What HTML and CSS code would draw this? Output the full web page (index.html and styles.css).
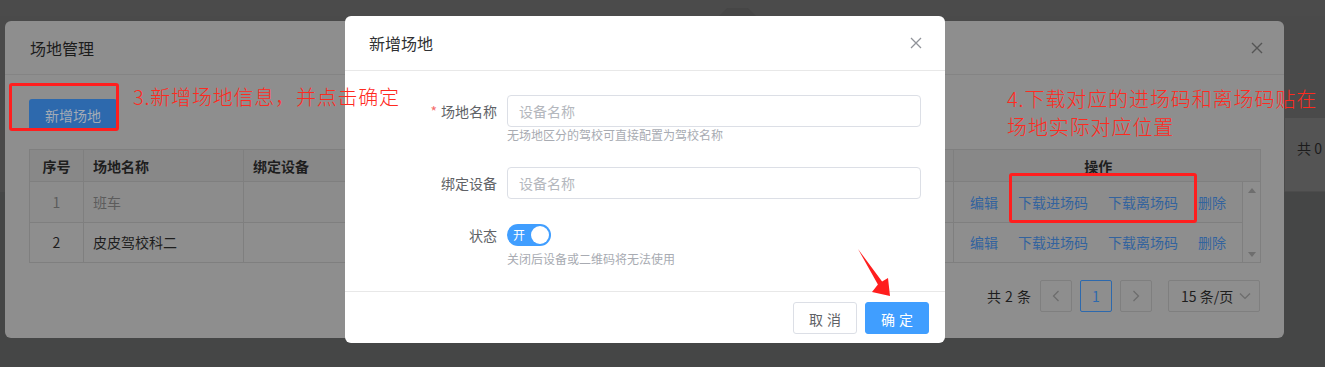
FILE: index.html
```html
<!DOCTYPE html>
<html lang="zh-CN">
<head>
    <meta charset="UTF-8">
    <meta name="viewport" content="width=device-width, initial-scale=1.0">
    <title>场地管理</title>
    <link rel="stylesheet" href="styles.css">
</head>
<body>
    <!-- page behind the dialogs -->
    <div class="bg-page">
        <div class="bg-top"><div class="bg-tab"></div></div>
        <div class="bg-main">
            <div class="bg-card"><span>共 0</span></div>
        </div>
    </div>

    <!-- 场地管理 dialog (dimmed by the mask) -->
    <div class="venue-dialog">
        <div class="venue-header">
            <span class="venue-title">场地管理</span>
            <svg class="venue-close" width="12" height="12" viewBox="0 0 12 12">
                <path d="M1 1L11 11M11 1L1 11" stroke="#555" stroke-width="1.4" fill="none"/>
            </svg>
        </div>
        <div class="venue-body">
            <button class="btn-add">新增场地</button>

            <table class="venue-table">
                <colgroup>
                    <col class="c-no">
                    <col class="c-name">
                    <col class="c-mid">
                    <col class="c-mid">
                    <col class="c-mid">
                    <col>
                    <col class="c-op">
                    <col class="c-gutter">
                </colgroup>
                <thead>
                    <tr>
                        <th class="center">序号</th>
                        <th>场地名称</th>
                        <th>绑定设备</th>
                        <th>进场设备</th>
                        <th>离场设备</th>
                        <th>状态</th>
                        <th class="center op-head">操作</th>
                        <th class="gutter-head"></th>
                    </tr>
                </thead>
                <tbody>
                    <tr class="row-muted">
                        <td class="center">1</td>
                        <td>班车</td>
                        <td></td>
                        <td></td>
                        <td></td>
                        <td></td>
                        <td class="ops">
                            <a>编辑</a><a>下载进场码</a><a>下载离场码</a><a>删除</a>
                        </td>
                        <td class="scroll" rowspan="2">
                            <div class="scroll-bar">
                                <span class="tri-up"></span>
                                <span class="tri-down"></span>
                            </div>
                        </td>
                    </tr>
                    <tr>
                        <td class="center">2</td>
                        <td>皮皮驾校科二</td>
                        <td></td>
                        <td></td>
                        <td></td>
                        <td></td>
                        <td class="ops">
                            <a>编辑</a><a>下载进场码</a><a>下载离场码</a><a>删除</a>
                        </td>
                    </tr>
                </tbody>
            </table>

            <div class="pager">
                <span class="pager-total">共 2 条</span>
                <span class="pager-btn">
                    <svg width="8" height="12" viewBox="0 0 8 12"><path d="M6.5 1L1.5 6l5 5" stroke="#6c6c6c" stroke-width="1.2" fill="none"/></svg>
                </span>
                <span class="pager-btn active">1</span>
                <span class="pager-btn">
                    <svg width="8" height="12" viewBox="0 0 8 12"><path d="M1.5 1l5 5-5 5" stroke="#6c6c6c" stroke-width="1.2" fill="none"/></svg>
                </span>
                <span class="pager-size">
                    15 条/页
                    <svg width="12" height="8" viewBox="0 0 12 8"><path d="M1 1.5l5 5 5-5" stroke="#6c6c6c" stroke-width="1.2" fill="none"/></svg>
                </span>
            </div>
        </div>
    </div>

    <!-- 新增场地 dialog -->
    <div class="add-dialog">
        <div class="add-header">
            <span class="add-title">新增场地</span>
            <svg class="add-close" width="12" height="12" viewBox="0 0 12 12">
                <path d="M1 1L11 11M11 1L1 11" stroke="#909399" stroke-width="1.3" fill="none"/>
            </svg>
        </div>
        <div class="add-body">
            <div class="form-item item-name">
                <label class="form-label"><span class="req">*</span>场地名称</label>
                <div class="form-control">
                    <input class="text-input" type="text" placeholder="设备名称">
                    <div class="form-help">无场地区分的驾校可直接配置为驾校名称</div>
                </div>
            </div>
            <div class="form-item item-device">
                <label class="form-label">绑定设备</label>
                <div class="form-control">
                    <input class="text-input" type="text" placeholder="设备名称">
                </div>
            </div>
            <div class="form-item">
                <label class="form-label">状态</label>
                <div class="form-control">
                    <div class="switch-row">
                        <span class="switch"><span class="switch-text">开</span><span class="switch-knob"></span></span>
                    </div>
                    <div class="form-help">关闭后设备或二维码将无法使用</div>
                </div>
            </div>
        </div>
        <div class="add-footer">
            <button class="btn btn-cancel">取消</button>
            <button class="btn btn-ok">确定</button>
        </div>
    </div>

    <!-- annotations -->
    <div class="mark mark-add"></div>
    <div class="note note-add">3.新增场地信息，并点击确定</div>
    <div class="note note-codes">4.下载对应的进场码和离场码贴在<br>场地实际对应位置</div>
    <div class="mark mark-codes"></div>
    <svg class="arrow" width="50" height="60" viewBox="0 0 50 60">
        <polygon points="8,5 32.1,37.6 38,34 40,52 22,48 27.9,40.4" fill="#ff1e1e"/>
    </svg>
</body>
</html>
```

FILE: styles.css
```css
* {
    box-sizing: border-box;
}

body {
    margin: 0;
    width: 1325px;
    height: 367px;
    overflow: hidden;
    position: relative;
    background-color: #454646;
    font-family: "Noto Sans CJK SC", "Noto Sans", sans-serif;
    font-size: 14px;
}

/* background page */
.bg-top {
    height: 16px;
    padding-top: 8px;
    background-color: #4b4b4b;
}

.bg-tab {
    margin-left: 719px;
    width: 37px;
    height: 8px;
    background-color: #464646;
    clip-path: polygon(22% 0, 78% 0, 100% 100%, 0 100%);
}

.bg-main {
    padding-top: 102px;
    background-color: #4a4a4a;
}

.bg-card {
    height: 74px;
    margin-left: 1285px;
    padding: 20px 0 0 12px;
    background-color: #545454;
    color: #1c1c1c;
    line-height: 20px;
    white-space: nowrap;
    border-bottom: 1px solid #4c4c4c;
}

/* 场地管理 */
.venue-dialog {
    position: absolute;
    left: 5px;
    top: 21px;
    width: 1279px;
    height: 317px;
    background-color: #8e8e8e;
    border-radius: 6px;
}

.venue-header {
    height: 54px;
    padding: 0 21px 0 25px;
    display: flex;
    align-items: center;
    justify-content: space-between;
    border-bottom: 1px solid #848484;
}

.venue-title {
    font-size: 16px;
    line-height: 20px;
    color: #1c1c1c;
}

.venue-body {
    padding: 24px 23px 0 24px;
}

.btn-add {
    height: 32px;
    padding: 0 16px;
    border: none;
    border-radius: 3px;
    background-color: #2d69ad;
    color: #a3abb5;
    font-family: inherit;
    font-size: 14px;
    line-height: 32px;
}

.venue-table {
    width: 100%;
    margin-top: 18px;
    table-layout: fixed;
    border-collapse: collapse;
    border: 1px solid #7f7f7f;
    color: #1e1e1e;
}

.c-no { width: 54px; }
.c-name { width: 160px; }
.c-mid { width: 200px; }
.c-op { width: 289px; }
.c-gutter { width: 18px; }

.venue-table th {
    height: 32px;
    padding: 0 9px;
    text-align: left;
    font-weight: bold;
    line-height: 20px;
    background-color: #888888;
    border: 1px solid #7f7f7f;
    white-space: nowrap;
}

.venue-table th.op-head {
    border-right: none;
}

.venue-table th.gutter-head {
    border-left: none;
}

.venue-table td {
    height: 40px;
    padding: 0 9px;
    line-height: 20px;
    border: 1px solid #7f7f7f;
    white-space: nowrap;
}

.venue-table .center {
    text-align: center;
}

.row-muted td {
    background-color: #8c8c8c;
    color: #5c5c5c;
}

.venue-table td.ops {
    text-align: center;
    padding: 0;
}

.ops a {
    color: #33639e;
    margin: 0 10px;
}

.venue-table td.scroll {
    padding: 0;
    background-color: #8e8e8e;
    vertical-align: top;
}

.scroll-bar {
    height: 80px;
    padding: 6px 0 5px;
    display: flex;
    flex-direction: column;
    align-items: center;
    justify-content: space-between;
}

.tri-up {
    border-left: 4px solid transparent;
    border-right: 4px solid transparent;
    border-bottom: 5px solid #6e6e6e;
}

.tri-down {
    border-left: 4px solid transparent;
    border-right: 4px solid transparent;
    border-top: 5px solid #6e6e6e;
}

.pager {
    margin-top: 17px;
    padding-right: 1px;
    display: flex;
    justify-content: flex-end;
    align-items: center;
    gap: 8px;
    color: #1e1e1e;
}

.pager-total {
    margin-right: 1px;
    line-height: 20px;
    word-spacing: 1px;
}

.pager-btn {
    width: 32px;
    height: 32px;
    border: 1px solid #7f7f7f;
    border-radius: 2px;
    display: flex;
    align-items: center;
    justify-content: center;
    line-height: 20px;
}

.pager-btn.active {
    border-color: #2d69ad;
    color: #2d69ad;
}

.pager-size {
    margin-left: 8px;
    width: 92px;
    height: 32px;
    padding: 0 8px 0 12px;
    border: 1px solid #7f7f7f;
    border-radius: 2px;
    display: flex;
    align-items: center;
    justify-content: space-between;
    line-height: 20px;
    white-space: nowrap;
}

/* 新增场地 */
.add-dialog {
    position: absolute;
    left: 345px;
    top: 16px;
    width: 600px;
    height: 327px;
    background-color: #ffffff;
    border-radius: 6px;
    display: flex;
    flex-direction: column;
}

.add-header {
    height: 55px;
    padding: 0 23px 0 24px;
    display: flex;
    align-items: center;
    justify-content: space-between;
    border-bottom: 1px solid #e8e8e8;
}

.add-title {
    font-size: 16px;
    line-height: 20px;
    color: #303133;
}

.add-body {
    padding: 24px 24px 24px 0;
}

.form-item {
    display: flex;
}

.item-name {
    margin-bottom: 24px;
}

.item-device {
    margin-bottom: 20px;
}

.form-label {
    width: 162px;
    padding-right: 10px;
    text-align: right;
    line-height: 32px;
    color: #606266;
}

.req {
    color: #f56c6c;
    margin-right: 4px;
}

.form-control {
    flex: 1;
}

.text-input {
    display: block;
    width: 100%;
    height: 32px;
    padding: 0 11px;
    border: 1px solid #dcdfe6;
    border-radius: 4px;
    font-family: inherit;
    font-size: 14px;
    color: #606266;
    outline: none;
}

.text-input::placeholder {
    color: #b4b7bd;
}

.form-help {
    font-size: 12px;
    line-height: 16px;
    color: #a8abb2;
}

.switch-row {
    height: 32px;
    display: flex;
    align-items: center;
}

.switch {
    width: 44px;
    height: 22px;
    padding: 0 2px 0 6px;
    border-radius: 11px;
    background-color: #409eff;
    display: flex;
    align-items: center;
    justify-content: space-between;
}

.switch-text {
    font-size: 12px;
    line-height: 16px;
    color: #ffffff;
}

.switch-knob {
    width: 18px;
    height: 18px;
    border-radius: 50%;
    background-color: #ffffff;
}

.add-footer {
    border-top: 1px solid #e8e8e8;
    padding: 10px 16px 9px;
    display: flex;
    justify-content: flex-end;
    gap: 8px;
}

.btn {
    width: 64px;
    height: 32px;
    border-radius: 3px;
    font-family: inherit;
    font-size: 14px;
    letter-spacing: 4px;
    text-indent: 4px;
    line-height: 30px;
}

.btn-cancel {
    border: 1px solid #dcdfe6;
    background-color: #ffffff;
    color: #606266;
}

.btn-ok {
    border: 1px solid #409eff;
    background-color: #409eff;
    color: #ffffff;
}

/* red annotations */
.mark {
    position: absolute;
    border: 3px solid #ff1e1e;
    border-radius: 3px;
}

.mark-add {
    left: 9px;
    top: 83px;
    width: 110px;
    height: 48px;
}

.mark-codes {
    left: 1009px;
    top: 173px;
    width: 188px;
    height: 50px;
}

.note {
    position: absolute;
    font-size: 20px;
    font-weight: 300;
    color: #ff2a1f;
    white-space: nowrap;
}

.note-add {
    left: 133px;
    top: 85px;
    line-height: 24px;
    letter-spacing: 0.8px;
}

.note-codes {
    left: 1007px;
    top: 85px;
    line-height: 28px;
    letter-spacing: 0.9px;
}

.arrow {
    position: absolute;
    left: 850px;
    top: 244px;
}
```
